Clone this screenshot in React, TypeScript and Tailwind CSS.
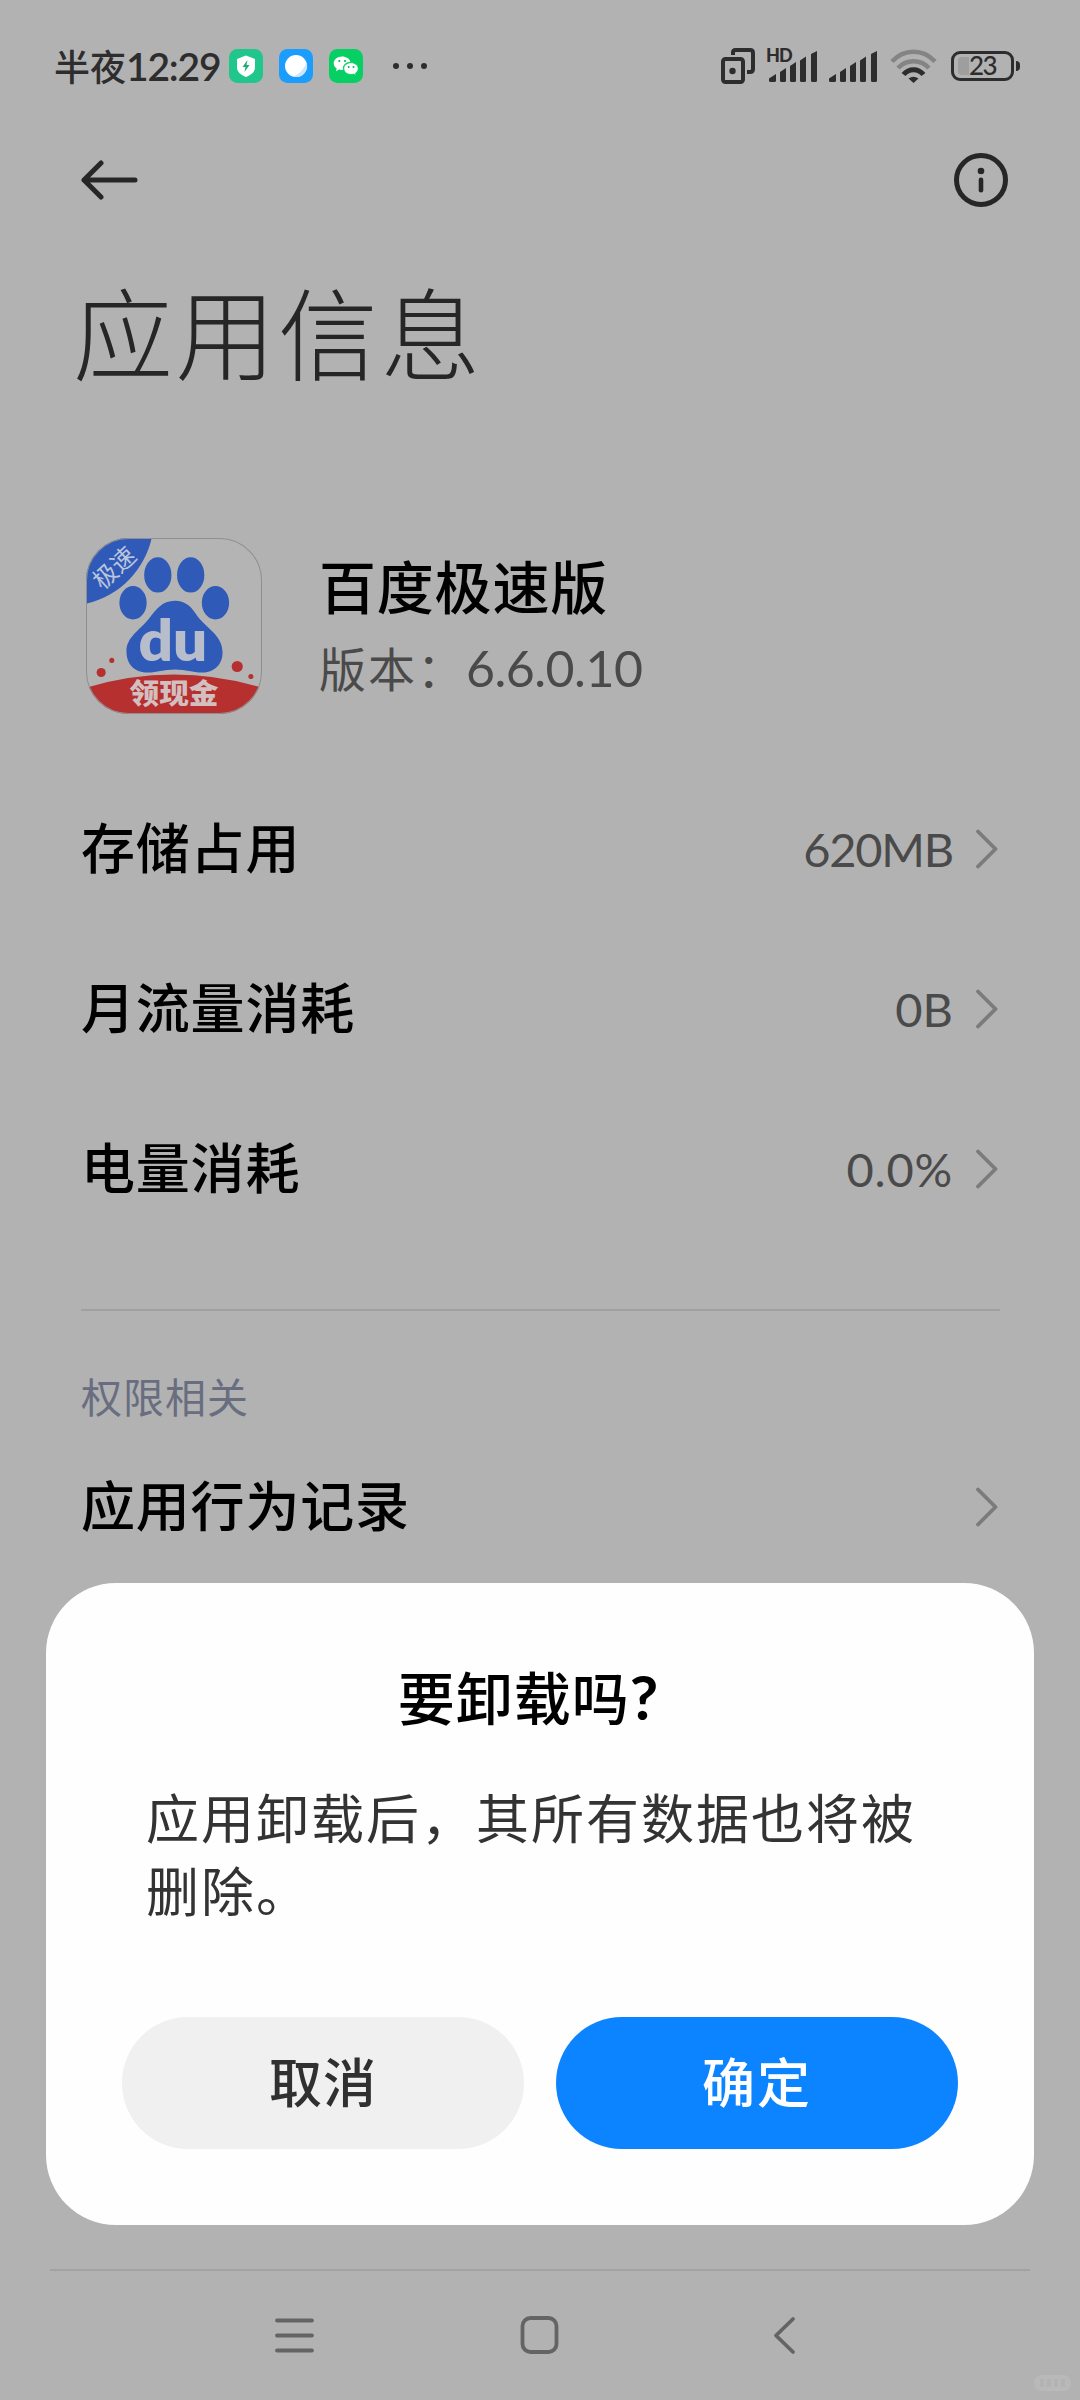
import type { ReactNode } from "react";

const usageRows = [
  { label: "存储占用", value: "620MB", spacing: "tracking-[-1.2px]" },
  { label: "月流量消耗", value: "0B", spacing: "tracking-normal" },
  { label: "电量消耗", value: "0.0%", spacing: "tracking-[0.8px]" },
];

function SignalBars() {
  return (
    <svg width="48" height="31" viewBox="0 0 48 31" fill="#2d2d2d">
      <path d="M0 27.5 7 23V29.5Q7 31 5.5 31H1.5Q0 31 0 29.5Z" />
      <path d="M11 21 17 17V29.5Q17 31 15.5 31H12.5Q11 31 11 29.5Z" />
      <path d="M21 15 27 11V29.5Q27 31 25.5 31H22.5Q21 31 21 29.5Z" />
      <path d="M31 9.5 37 5.5V29.5Q37 31 35.5 31H32.5Q31 31 31 29.5Z" />
      <path d="M42 3 48 0V29.5Q48 31 46.5 31H43.5Q42 31 42 29.5Z" />
    </svg>
  );
}

function StatusBar() {
  return (
    <div className="flex h-[132px] items-start justify-between pl-[54px] pr-[60px] text-[#2d2d2d]">
      <div className="flex h-[132px] items-center">
        <span className="w-[175px] whitespace-nowrap text-[36px] font-medium leading-none">
          半夜<span className="text-[39px] font-semibold tracking-[-1.2px]">12:29</span>
        </span>
        <svg width="34" height="34" viewBox="0 0 34 34">
          <rect width="34" height="34" rx="8.5" fill="#20c68c" />
          <path d="M17 6.5 26 10v8.5c0 4.5-4 7.5-9 9.5-5-2-9-5-9-9.5V10Z" fill="#fff" />
          <path d="M18.5 11 13.500 18h3l-1 5 5-7h-3Z" fill="#1faa7c" />
        </svg>
        <svg className="ml-4" width="34" height="34" viewBox="0 0 34 34">
          <rect width="34" height="34" rx="8.5" fill="#1a9dfc" />
          <circle cx="17" cy="17" r="11" fill="#fff" />
          <path d="M27.5 13.5C26 19 20 25.5 14 27.6A11 11 0 0 0 27.5 13.5Z" fill="#cde6fd" />
        </svg>
        <svg className="ml-4" width="34" height="34" viewBox="0 0 34 34">
          <rect width="34" height="34" rx="8.5" fill="#06d063" />
          <path
            d="M13 7.5c-4.7 0-8.3 3-8.3 6.8 0 2.2 1.100 4 3 5.300L7 22.200l3-1.600c1 .3 2 .4 3 .4l1.200-.1c-1.200-4.500 2.400-8.200 7.200-8.200C20.700 9.800 17.300 7.500 13 7.500Z"
            fill="#fff"
          />
          <path
            d="M22 13.700c-4 0-7.200 2.600-7.200 5.900s3.200 5.900 7.200 5.900c.9 0 1.800-.2 2.600-.4l2.500 1.400-.7-2.200c1.700-1.100 2.800-2.800 2.800-4.700 0-3.300-3.200-5.900-7.200-5.900Z"
            fill="#fff"
            stroke="#06d063"
            strokeWidth=".8"
          />
          <g fill="#06b957">
            <circle cx="10.300" cy="12" r="1.100" />
            <circle cx="16" cy="12" r="1.100" />
            <circle cx="19.700" cy="18" r="1" />
            <circle cx="24.500" cy="18" r="1" />
          </g>
        </svg>
        <svg className="ml-[30px]" width="34" height="6" viewBox="0 0 34 6" fill="#2d2d2d">
          <circle cx="3" cy="3" r="3" />
          <circle cx="17" cy="3" r="3" />
          <circle cx="31" cy="3" r="3" />
        </svg>
      </div>

      <div className="flex pt-[47px]">
        <svg width="36" height="38" viewBox="0 0 36 38" fill="none" stroke="#2d2d2d" strokeWidth="4">
          <rect x="3" y="12" width="20" height="23" rx="2.500" />
          <path d="M13 8V5.500Q13 3 15.500 3H30Q33 3 33 6V22Q33 25 30 25H27" />
          <circle cx="12.500" cy="24" r="3.200" fill="#2d2d2d" stroke="none" />
        </svg>
        <div className="relative ml-[13px] pt-1">
          <span className="absolute -left-[3px] -top-px font-[Lato] text-[18px] font-black leading-none tracking-[-1px]">
            HD
          </span>
          <SignalBars />
        </div>
        <div className="ml-3 pt-1">
          <SignalBars />
        </div>
        <svg className="ml-[13px] mt-[2px]" width="47" height="35" viewBox="0 0 47 35" fill="none" strokeWidth="4.500">
          <path d="M2 12.500C14 -.5 33 -.5 45 12.500" stroke="#848484" />
          <path d="M8 19C16.500 10 30.500 10 39 19" stroke="#848484" />
          <path d="M13.500 25.500C19 19 28 19 33.500 25.500" stroke="#2d2d2d" strokeWidth="5" />
          <path d="M23.500 34 18.500 29.500Q23.500 26 28.500 29.500Z" fill="#2d2d2d" />
        </svg>
        <div className="ml-[14px] mt-1 flex h-[30px] items-center">
          <div className="flex h-[30px] w-[63px] items-center rounded-[9px] border-[3px] border-[#2d2d2d] pl-1 font-[Lato] text-[26px] font-medium leading-none">
            <div className="h-[18px] w-[11px] rounded-l-[4px] bg-[#9e9e9e]" />
            <span className="-mt-[3px] tracking-[-1.5px]">23</span>
          </div>
          <div className="ml-[2px] h-[10px] w-[4px] rounded-r bg-[#2d2d2d]" />
        </div>
      </div>
    </div>
  );
}

function Chevron() {
  return (
    <svg
      width="24"
      height="40"
      viewBox="0 0 24 40"
      fill="none"
      stroke="#7b7b7b"
      strokeWidth="3.800"
      strokeLinecap="round"
      strokeLinejoin="round"
    >
      <path d="M2 2.500 19.500 20 2 37.500" />
    </svg>
  );
}

function AppIcon() {
  return (
    <svg width="176" height="176" viewBox="0 0 174 174">
      <defs>
        <clipPath id="icon-shape">
          <rect width="174" height="174" rx="42" />
        </clipPath>
      </defs>
      <g clipPath="url(#icon-shape)">
        <rect width="174" height="174" fill="#b4b4b4" />
        <path d="M0 0H65C58 30 35 57 0 65Z" fill="#2f5ab8" />
        <g fill="#2f5ab8">
          <ellipse cx="46.500" cy="64" rx="13.500" ry="16.500" />
          <ellipse cx="71" cy="36.500" rx="13.500" ry="17.500" />
          <ellipse cx="103.500" cy="36.500" rx="13.500" ry="17.500" />
          <ellipse cx="128" cy="64" rx="13.500" ry="16.500" />
          <path d="M88 62C99 62 105 69 110 77 118 88 135 96 135 113 135 126 126 133 115 133 105 133 99 130 88 130 76 130 71 133 61 133 49 133 40 126 40 112 40 98 53 91 62 80 69 71 75 62 88 62Z" />
        </g>
        <path d="M0 148Q87 122 174 148V174H0Z" fill="#b5302f" />
        <g fill="#b5302f">
          <circle cx="15" cy="133" r="4.500" />
          <circle cx="25.500" cy="121" r="2.500" />
          <circle cx="149.500" cy="127" r="5.500" />
          <circle cx="163" cy="137" r="2.500" />
        </g>
        <text
          x="86"
          y="122"
          textAnchor="middle"
          textLength="68"
          lengthAdjust="spacingAndGlyphs"
          fill="#b8bdcc"
          className="font-[Lato] text-[56px] font-extrabold"
        >
          du
        </text>
        <text
          x="87"
          y="164.500"
          textAnchor="middle"
          textLength="88"
          lengthAdjust="spacingAndGlyphs"
          fill="#d3bfbf"
          className="text-[28px] font-black"
        >
          领现金
        </text>
        <text
          transform="translate(28.500 30) rotate(-43)"
          y="8"
          textAnchor="middle"
          fill="#bcc5dc"
          className="text-[24px]"
        >
          极速
        </text>
      </g>
      <rect x=".5" y=".5" width="173" height="173" rx="41.500" fill="none" stroke="#8f8f8f" strokeWidth="1" />
    </svg>
  );
}

function ListRow({ label, children }: { label: string; children?: ReactNode }) {
  return (
    <div className="flex h-40 items-center justify-between">
      <span className="text-[54px] font-medium leading-none tracking-[0.8px] text-black">{label}</span>
      <div className="flex items-center gap-[23px]">
        {children}
        <Chevron />
      </div>
    </div>
  );
}

function ConfirmDialog() {
  return (
    <div className="absolute left-[46px] top-[1583px] flex h-[642px] w-[988px] flex-col rounded-[70px] bg-[#fefefe] px-[76px] pt-[79px]">
      <h2 className="pr-[23px] text-center text-[57px] font-medium leading-[72px] tracking-[1px] text-black">
        要卸载吗<span className="font-[Lato] text-[62px] font-bold leading-none">?</span>
      </h2>
      <p className="mt-[48px] h-[146px] whitespace-nowrap pl-[24px] text-[53px] leading-[73px] tracking-[2px] text-[#333]">
        应用卸载后，其所有数据也将被
        <br />
        删除。
      </p>
      <div className="mt-[89px] flex gap-8">
        <button className="h-[132px] flex-1 rounded-full bg-[#f0f0f0] text-[53px] font-medium tracking-[1px] text-[#303030]">
          取消
        </button>
        <button className="h-[132px] flex-1 rounded-full bg-[#0d84ff] text-[53px] font-medium tracking-[2px] text-white">
          确定
        </button>
      </div>
    </div>
  );
}

function NavBar() {
  return (
    <div className="absolute bottom-0 left-[50px] h-[131px] w-[980px] border-t-2 border-[#a2a2a2]">
      <svg
        width="980"
        height="129"
        viewBox="50 2271 980 129"
        fill="none"
        stroke="#646464"
        strokeWidth="3.800"
        strokeLinecap="round"
        strokeLinejoin="round"
      >
        <path d="M277 2320.500H312M277 2335.500H312M277 2350.500H312" />
        <rect x="522.500" y="2318" width="34" height="34" rx="8" />
        <path d="M793 2319 776 2335.500 793 2352" />
      </svg>
    </div>
  );
}

export default function App() {
  return (
    <div className="relative h-[2400px] w-[1080px] overflow-hidden bg-[#b2b2b2] font-[Lato,'Noto_Sans_CJK_SC',sans-serif]">
      <StatusBar />

      <div className="flex h-[96px] items-center justify-between pl-[81px] pr-[71px]">
        <svg
          width="58"
          height="40"
          viewBox="0 0 58 40"
          fill="none"
          stroke="#262626"
          strokeWidth="5"
          strokeLinecap="round"
          strokeLinejoin="round"
        >
          <path d="M20 3 3 20 20 37M3 20H54" />
        </svg>
        <svg width="56" height="56" viewBox="0 0 56 56">
          <circle cx="28" cy="28" r="24.500" fill="none" stroke="#262626" strokeWidth="5" />
          <circle cx="28" cy="19" r="3.300" fill="#262626" />
          <rect x="25.700" y="25.500" width="4.600" height="15" rx="2.300" fill="#262626" />
        </svg>
      </div>

      <h1 className="h-[310px] pl-[73px] pt-[56px] text-[100px] font-light leading-[100px] tracking-[2.500px] text-[#262626]">
        应用信息
      </h1>

      <div className="flex h-[231px] pl-[86px]">
        <AppIcon />
        <div className="ml-[57px] pt-[15px]">
          <div className="text-[57px] font-medium leading-[68px] tracking-[0.8px] text-black">百度极速版</div>
          <div className="mt-[17px] whitespace-nowrap text-[47px] leading-[60px] tracking-[2px] text-[#4a4a4a]">
            版本：<span className="text-[50px] tracking-[-0.5px]">6.6.0.10</span>
          </div>
        </div>
      </div>

      <div className="mx-20 pl-px">
        {usageRows.map((row) => (
          <ListRow key={row.label} label={row.label}>
            <span className={`text-[47px] leading-none text-[#4a4a4a] ${row.spacing}`}>{row.value}</span>
          </ListRow>
        ))}
        <div className="mt-[60px] h-[2px] bg-[#a0a0a0]" />
        <div className="mt-[58px] text-[41px] leading-[58px] tracking-[1px] text-[#686d80]">权限相关</div>
        <ListRow label="应用行为记录" />
      </div>

      <ConfirmDialog />
      <NavBar />

      {/* Corner badge */}
      <div className="absolute bottom-[9px] right-[9px] flex h-[16px] w-[37px] items-center justify-center gap-[3px] rounded-full bg-[#b9b9b9]">
        <div className="h-2 w-1 bg-[#b3b3b3]" />
        <div className="h-2 w-1 bg-[#b3b3b3]" />
        <div className="h-2 w-1 bg-[#b3b3b3]" />
        <div className="h-2 w-1 bg-[#b3b3b3]" />
      </div>
    </div>
  );
}
